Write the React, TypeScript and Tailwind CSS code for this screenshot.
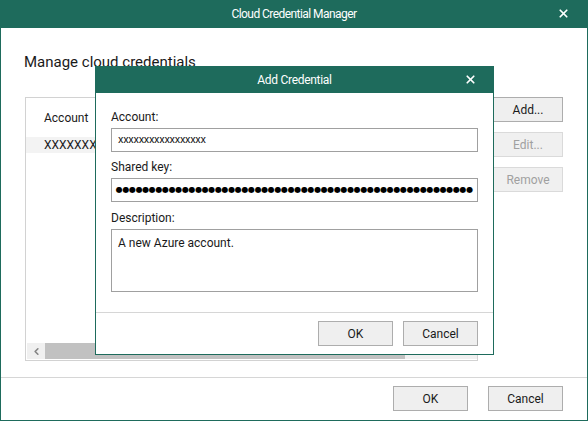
import { X, ChevronLeft } from "lucide-react";

const font = { fontFamily: 'Roboto, "Noto Sans", sans-serif' };

function Btn({ children, disabled, className = "w-[75px]" }: { children: React.ReactNode; disabled?: boolean; className?: string }) {
  return (
    <button
      className={
        "flex h-[25px] shrink-0 items-center justify-center border text-[12px] " +
        (disabled ? "border-[#dadada] bg-[#f0f0f0] text-[#a0a0a0] " : "border-[#adadad] bg-[#efefef] text-[#1a1a1a] ") +
        className
      }
    >
      {children}
    </button>
  );
}

function AddCredential() {
  return (
    <div className="absolute left-[94px] top-[66px] flex h-[289px] w-[399px] flex-col border border-t-0 border-[#1e6b5c] bg-white">
      <div className="relative -mx-px flex h-[27px] items-center justify-center bg-[#1e6b5c] text-[12px] tracking-[-0.3px] text-white">
        Add Credential
        <X className="absolute right-[17px] top-[7px] h-[13px] w-[13px]" strokeWidth={3.2} />
      </div>
      <div className="flex flex-col px-[15px] pt-[16px] text-[12px] text-[#1a1a1a]">
        <div className="h-[16px] leading-[16px]">Account:</div>
        <div className="mt-[3px] flex h-[24px] items-center border border-[#a0a0a0] pl-[6px] text-[11px] tracking-[-0.3px]">
          xxxxxxxxxxxxxxxxx
        </div>
        <div className="mt-[7px] h-[16px] leading-[16px]">Shared key:</div>
        <div className="mt-[3px] flex h-[24px] items-center overflow-hidden border border-[#a0a0a0] pl-[4px]">
          <div
            className="grid w-[357px] grid-cols-[repeat(54,minmax(0,1fr))] justify-items-center text-[8px] leading-[10px] text-black"
            style={{ fontFamily: '"DejaVu Sans", sans-serif' }}
          >
            {Array.from({ length: 54 }, (_, i) => (
              <span key={i} className="flex w-full justify-center">●</span>
            ))}
          </div>
        </div>
        <div className="mt-[8px] h-[16px] leading-[16px]">Description:</div>
        <div className="mt-[3px] h-[63px] border border-[#a0a0a0] px-[6px] pt-[6px] leading-[14px]">
          A new Azure account.
        </div>
      </div>
      <div className="mt-auto border-t border-[#d6d6d6] px-[15px] pb-[8px] pt-[8px]">
        <div className="flex justify-end gap-[10px]">
          <Btn>OK</Btn>
          <Btn>Cancel</Btn>
        </div>
      </div>
    </div>
  );
}

export default function App() {
  return (
    <div className="relative flex h-[421px] w-[588px] flex-col border border-t-0 border-[#1e6b5c] bg-white" style={font}>
      <div className="relative -mx-px flex h-[28px] items-center justify-center bg-[#1e6b5c] text-[12px] tracking-[-0.55px] text-white">
        Cloud Credential Manager
        <X className="absolute right-[18px] top-[7px] h-[13px] w-[13px]" strokeWidth={3.2} />
      </div>
      <div className="px-[23px] pt-[24px] text-[15px] leading-[20px] text-[#1a1a1a]">Manage cloud credentials</div>
      <div className="mt-[25px] flex gap-[15px] pl-[24px] pr-[24px]">
        <div className="relative flex h-[264px] w-[453px] shrink-0 flex-col border border-[#d2d2d2] text-[12px] text-[#1a1a1a]">
          <div className="pl-[18px] pt-[12px] leading-[16px]">Account</div>
          <div className="mt-[11px] h-[16px] bg-[#f3f3f3] pl-[18px] leading-[16px]">XXXXXXXXXXXXXXXX</div>
          <div className="mt-auto mb-px ml-px flex h-[16px]">
            <div className="flex w-[18px] items-center justify-center bg-[#f0f0f0]">
              <ChevronLeft className="h-[11px] w-[11px] text-[#858585]" strokeWidth={3.5} />
            </div>
            <div className="w-[360px] bg-[#c1c1c1]" />
            <div className="flex-1 bg-[#f0f0f0]" />
          </div>
        </div>
        <div className="flex flex-col gap-[10px]">
          <Btn className="w-[70px]">Add...</Btn>
          <Btn disabled className="w-[70px]">Edit...</Btn>
          <Btn disabled className="w-[70px]">Remove</Btn>
        </div>
      </div>
      <div className="mt-auto border-t border-[#d6d6d6] px-[24px] pb-[9px] pt-[8px]">
        <div className="flex justify-end gap-[20px]">
          <Btn>OK</Btn>
          <Btn>Cancel</Btn>
        </div>
      </div>
      <AddCredential />
    </div>
  );
}
